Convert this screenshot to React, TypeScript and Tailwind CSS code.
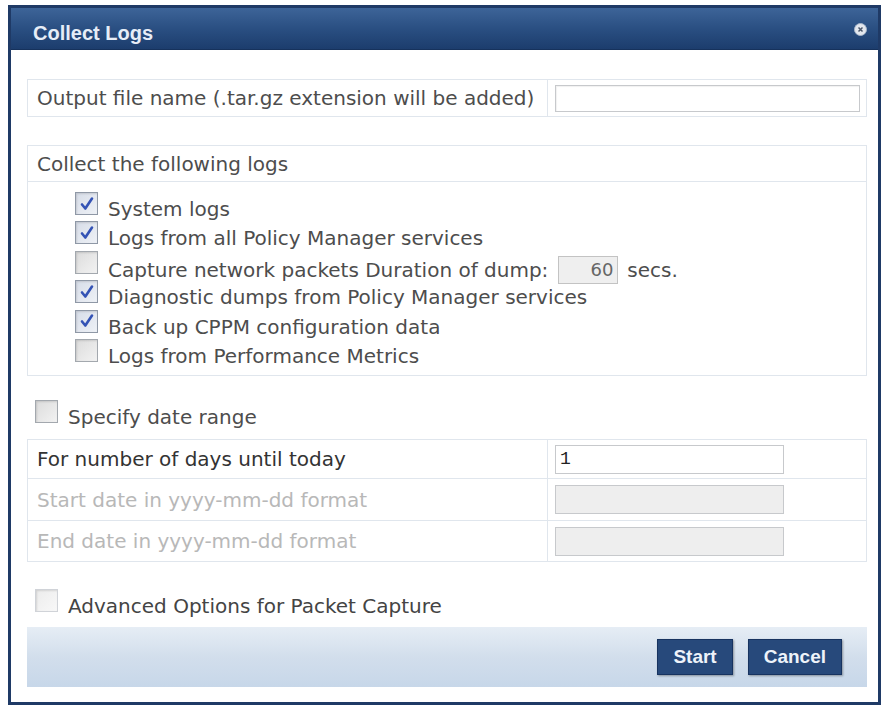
import React from "react";

const FONT = { fontFamily: '"DejaVu Sans", Verdana, sans-serif' };
const TITLE_FONT = { fontFamily: '"Liberation Sans", Arial, sans-serif' };

function Box({ checked, faded }: { checked?: boolean; faded?: boolean }) {
  return (
    <div
      className={
        "w-[23px] h-[23px] shrink-0 border flex items-center justify-center shadow-[inset_1px_1px_2px_rgba(0,0,0,0.12)] " +
        (faded
          ? "border-[#d0d3d8] bg-gradient-to-br from-[#ececec] to-[#f8f8f8]"
          : checked
          ? "border-[#8f98a6] bg-gradient-to-br from-[#d7dde8] to-[#eef1f6]"
          : "border-[#a3a8ae] bg-gradient-to-br from-[#dcdcdc] to-[#f2f2f2]")
      }
    >
      {checked && (
        <svg width="16" height="16" viewBox="0 0 16 16">
          <path d="M3 8.5 L6.3 12.5 L13 2.5" fill="none" stroke="#3453b5" strokeWidth="2.6" strokeLinecap="round" strokeLinejoin="round" />
        </svg>
      )}
    </div>
  );
}

function LogRow({ checked, children }: { checked?: boolean; children: React.ReactNode }) {
  return (
    <div className="flex items-start gap-[10px] h-[29.4px]">
      <Box checked={checked} />
      <div className="mt-[5px] leading-[24px] flex items-center whitespace-nowrap">{children}</div>
    </div>
  );
}

export default function App() {
  return (
    <div className="w-[887px] h-[709px] bg-white overflow-hidden text-[20px] text-[#4d4d4d]" style={FONT}>
      <div className="ml-[8px] mt-[5px] w-[873px] border-[3px] border-[#1f3a66] bg-white">
        {/* title bar */}
        <div className="h-[42px] bg-gradient-to-b from-[#3d6498] via-[#2a4f82] to-[#1c3d6d] flex items-start justify-between pl-[22px] pr-[11px] border-b border-[#16325c]">
          <div className="mt-[13px] text-[20px] leading-[24px] font-bold text-[#e6edf7]" style={TITLE_FONT}>
            Collect Logs
          </div>
          <div className="mt-[15px] w-[13px] h-[13px] rounded-full bg-[#e3e7ee] border border-[#a9b8cc] flex items-center justify-center">
            <svg width="7" height="7" viewBox="0 0 7 7">
              <path d="M1.5 1.5 L5.5 5.5 M5.5 1.5 L1.5 5.5" stroke="#4a566a" strokeWidth="1.5" />
            </svg>
          </div>
        </div>

        {/* body */}
        <div className="pl-[16px] pr-[11px] pt-[29px] pb-[15px]">
          {/* output file row */}
          <div className="flex h-[38px] border border-[#e0e6ed]">
            <div className="w-[520px] border-r border-[#e0e6ed] pl-[9px] flex items-center whitespace-nowrap">
              Output file name (.tar.gz extension will be added)
            </div>
            <div className="flex-1 flex items-center pl-[7px] pr-[6px]">
              <div className="w-full h-[27px] border border-[#c7c9cc] bg-white shadow-[inset_1px_1px_1px_rgba(0,0,0,0.06)]" />
            </div>
          </div>

          {/* collect logs box */}
          <div className="mt-[28px] border border-[#e0e6ed]">
            <div className="h-[36px] border-b border-[#e0e6ed] pl-[9px] flex items-center">Collect the following logs</div>
            <div className="pl-[47px] pt-[10px] pb-[7px]">
              <LogRow checked>System logs</LogRow>
              <LogRow checked>Logs from all Policy Manager services</LogRow>
              <LogRow>
                <span>Capture network packets Duration of dump:</span>
                <span className="ml-[10px] w-[60px] h-[28px] border border-[#c3c3c3] bg-[#efefef] flex items-center justify-end pr-[4px] text-[18px] text-[#666]">
                  60
                </span>
                <span className="ml-[9px]">secs.</span>
              </LogRow>
              <LogRow checked>Diagnostic dumps from Policy Manager services</LogRow>
              <LogRow checked>Back up CPPM configuration data</LogRow>
              <LogRow>Logs from Performance Metrics</LogRow>
            </div>
          </div>

          {/* specify date range */}
          <div className="mt-[24px] ml-[8px] flex items-start gap-[10px] h-[39px]">
            <Box />
            <div className="mt-[5px] leading-[24px]">Specify date range</div>
          </div>

          {/* date table */}
          <div className="border border-[#e0e6ed]">
            <div className="flex h-[39px] border-b border-[#e0e6ed]">
              <div className="w-[520px] border-r border-[#e0e6ed] pl-[9px] flex items-center text-[#333]">
                For number of days until today
              </div>
              <div className="flex-1 flex items-center pl-[7px]">
                <div className="w-[229px] h-[29px] border border-[#c7c9cc] bg-white flex items-center pl-[4px] text-[18px] text-[#222]" style={{ fontFamily: '"Liberation Mono", "DejaVu Sans Mono", monospace' }}>
                  1
                </div>
              </div>
            </div>
            <div className="flex h-[42px] border-b border-[#e0e6ed]">
              <div className="w-[520px] border-r border-[#e0e6ed] pl-[9px] flex items-center text-[#b8b8b8]">
                Start date in yyyy-mm-dd format
              </div>
              <div className="flex-1 flex items-center pl-[7px]">
                <div className="w-[229px] h-[29px] border border-[#c7c9cc] bg-[#eeeeee]" />
              </div>
            </div>
            <div className="flex h-[40px]">
              <div className="w-[520px] border-r border-[#e0e6ed] pl-[9px] flex items-center text-[#b8b8b8]">
                End date in yyyy-mm-dd format
              </div>
              <div className="flex-1 flex items-center pl-[7px]">
                <div className="w-[229px] h-[29px] border border-[#c7c9cc] bg-[#eeeeee]" />
              </div>
            </div>
          </div>

          {/* advanced options */}
          <div className="mt-[27px] ml-[8px] flex items-start gap-[10px] h-[38px]">
            <Box faded />
            <div className="mt-[5px] leading-[24px] text-[#444]">Advanced Options for Packet Capture</div>
          </div>

          {/* footer */}
          <div className="h-[60px] bg-gradient-to-b from-[#e6edf5] via-[#d2deec] to-[#c7d7e9] flex items-center justify-end gap-[15px] pr-[25px]">
            <button className="h-[36px] px-[15px] bg-[#27497b] border border-[#173360] shadow-[1px_1px_2px_rgba(0,0,0,0.35)] text-[19px] font-bold text-[#eef3fa]" style={TITLE_FONT}>
              Start
            </button>
            <button className="h-[36px] px-[15px] bg-[#27497b] border border-[#173360] shadow-[1px_1px_2px_rgba(0,0,0,0.35)] text-[19px] font-bold text-[#eef3fa]" style={TITLE_FONT}>
              Cancel
            </button>
          </div>
        </div>
      </div>
    </div>
  );
}
